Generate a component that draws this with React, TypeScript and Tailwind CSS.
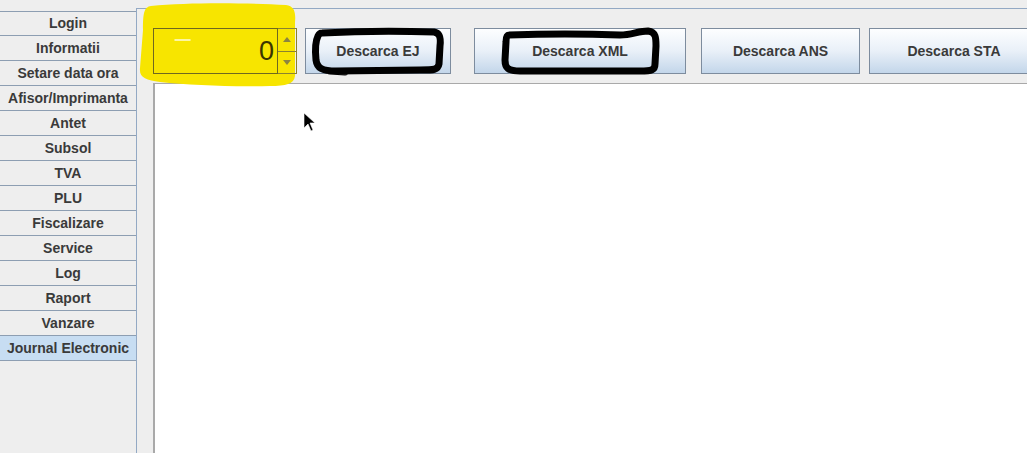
import React from 'react';

const tabs = [
  'Login',
  'Informatii',
  'Setare data ora',
  'Afisor/Imprimanta',
  'Antet',
  'Subsol',
  'TVA',
  'PLU',
  'Fiscalizare',
  'Service',
  'Log',
  'Raport',
  'Vanzare',
  'Journal Electronic',
];

function Btn({ label, className }: { label: string; className: string }) {
  return (
    <button
      className={`h-[46px] shrink-0 border border-[#7d8c9e] bg-gradient-to-b from-[#fdfeff] via-[#e9f0f8] to-[#c3d6ea] text-[14px] font-bold text-[#3a3a3a] ${className}`}
    >
      {label}
    </button>
  );
}

function Spinner() {
  return (
    <div className="relative z-10 flex h-[46px] w-[144px] shrink-0">
      <div className="flex flex-1 items-center justify-end border border-[#6e6820] pr-[3px] text-[27px] leading-none text-[#3b3600]">
        0
      </div>
      <div className="flex w-[19px] flex-col border-y border-r border-[#8a8330]">
        <div className="flex flex-1 items-center justify-center border-b border-[#8a8330]">
          <div className="h-0 w-0 border-x-[4px] border-b-[5px] border-x-transparent border-b-[#8c8440]" />
        </div>
        <div className="flex flex-1 items-center justify-center">
          <div className="h-0 w-0 border-x-[4px] border-t-[5px] border-x-transparent border-t-[#8c8440]" />
        </div>
      </div>
    </div>
  );
}

export default function App() {
  return (
    <div className="relative flex h-[453px] w-[1027px] overflow-hidden bg-[#eeeeee] font-['Liberation_Sans',Arial,sans-serif]">
      {/* tab strip */}
      <div className="flex w-[136px] shrink-0 flex-col pt-[11px]">
        {tabs.map((t, i) => (
          <div
            key={t}
            className={`flex h-[25px] items-center justify-center border-b border-[#8d9eb2] text-[14px] font-bold text-[#3a3a3a] ${
              i === 0 ? 'border-t' : ''
            } ${t === 'Journal Electronic' ? 'bg-[#c7ddf2]' : ''}`}
          >
            {t}
          </div>
        ))}
      </div>

      {/* content panel */}
      <div className="mt-[8px] flex flex-1 flex-col border-l border-t border-[#93a9c4]">
        <div className="flex h-[74px] items-start pl-[16px] pt-[19px]">
          <Spinner />
          <Btn label="Descarca EJ" className="ml-[8px] w-[146px]" />
          <Btn label="Descarca XML" className="ml-[23px] w-[212px]" />
          <Btn label="Descarca ANS" className="ml-[15px] w-[159px]" />
          <Btn label="Descarca STA" className="ml-[9px] w-[170px]" />
        </div>
        <div className="ml-[16px] flex-1 border-l-2 border-t border-[#a9a9a9] bg-white" />
      </div>

      {/* highlighter, under the spinner */}
      <svg className="pointer-events-none absolute left-0 top-0 z-0" width="1027" height="453">
        <path
          d="M151 6 C190 2 250 3 286 5 C294 6 296 12 295 22 L295 76 C294 84 286 86 270 86 C230 87 190 85 160 82 C146 80 139 78 140 68 L143 30 C143 13 144 7 151 6 Z"
          fill="#f7e500"
        />
      </svg>

      {/* marker + cursor, on top */}
      <svg className="pointer-events-none absolute left-0 top-0 z-20" width="1027" height="453">
        <path d="M175 40 L190 40" stroke="#ffffff" strokeWidth="1.5" fill="none" strokeLinecap="round" opacity="0.85" />
        <path
          d="M322 33 C360 31 400 31 434 32 C440 33 441 38 440 46 L439 64 C438 70 434 70 420 70 L336 71 C322 71 317 68 316 60 C315 50 316 40 318 36 C319 34 320 33 322 33 Z M330 71 L345 72"
          stroke="#000"
          strokeWidth="7"
          fill="none"
          strokeLinecap="round"
          strokeLinejoin="round"
        />
        <path
          d="M509 35 C540 34 590 34 620 35 C632 35 638 31 648 31 C656 32 656 38 656 46 L655 64 C655 70 652 71 640 71 L520 71 C508 71 505 68 505 60 L506 42 C506 37 507 35 509 35 Z"
          stroke="#000"
          strokeWidth="7"
          fill="none"
          strokeLinecap="round"
          strokeLinejoin="round"
        />
        <path d="M304 113 L304 128 L308 124 L311 131 L313 130 L310 123 L315 123 Z" fill="#000" stroke="#fff" strokeWidth="0.6" />
      </svg>
    </div>
  );
}
